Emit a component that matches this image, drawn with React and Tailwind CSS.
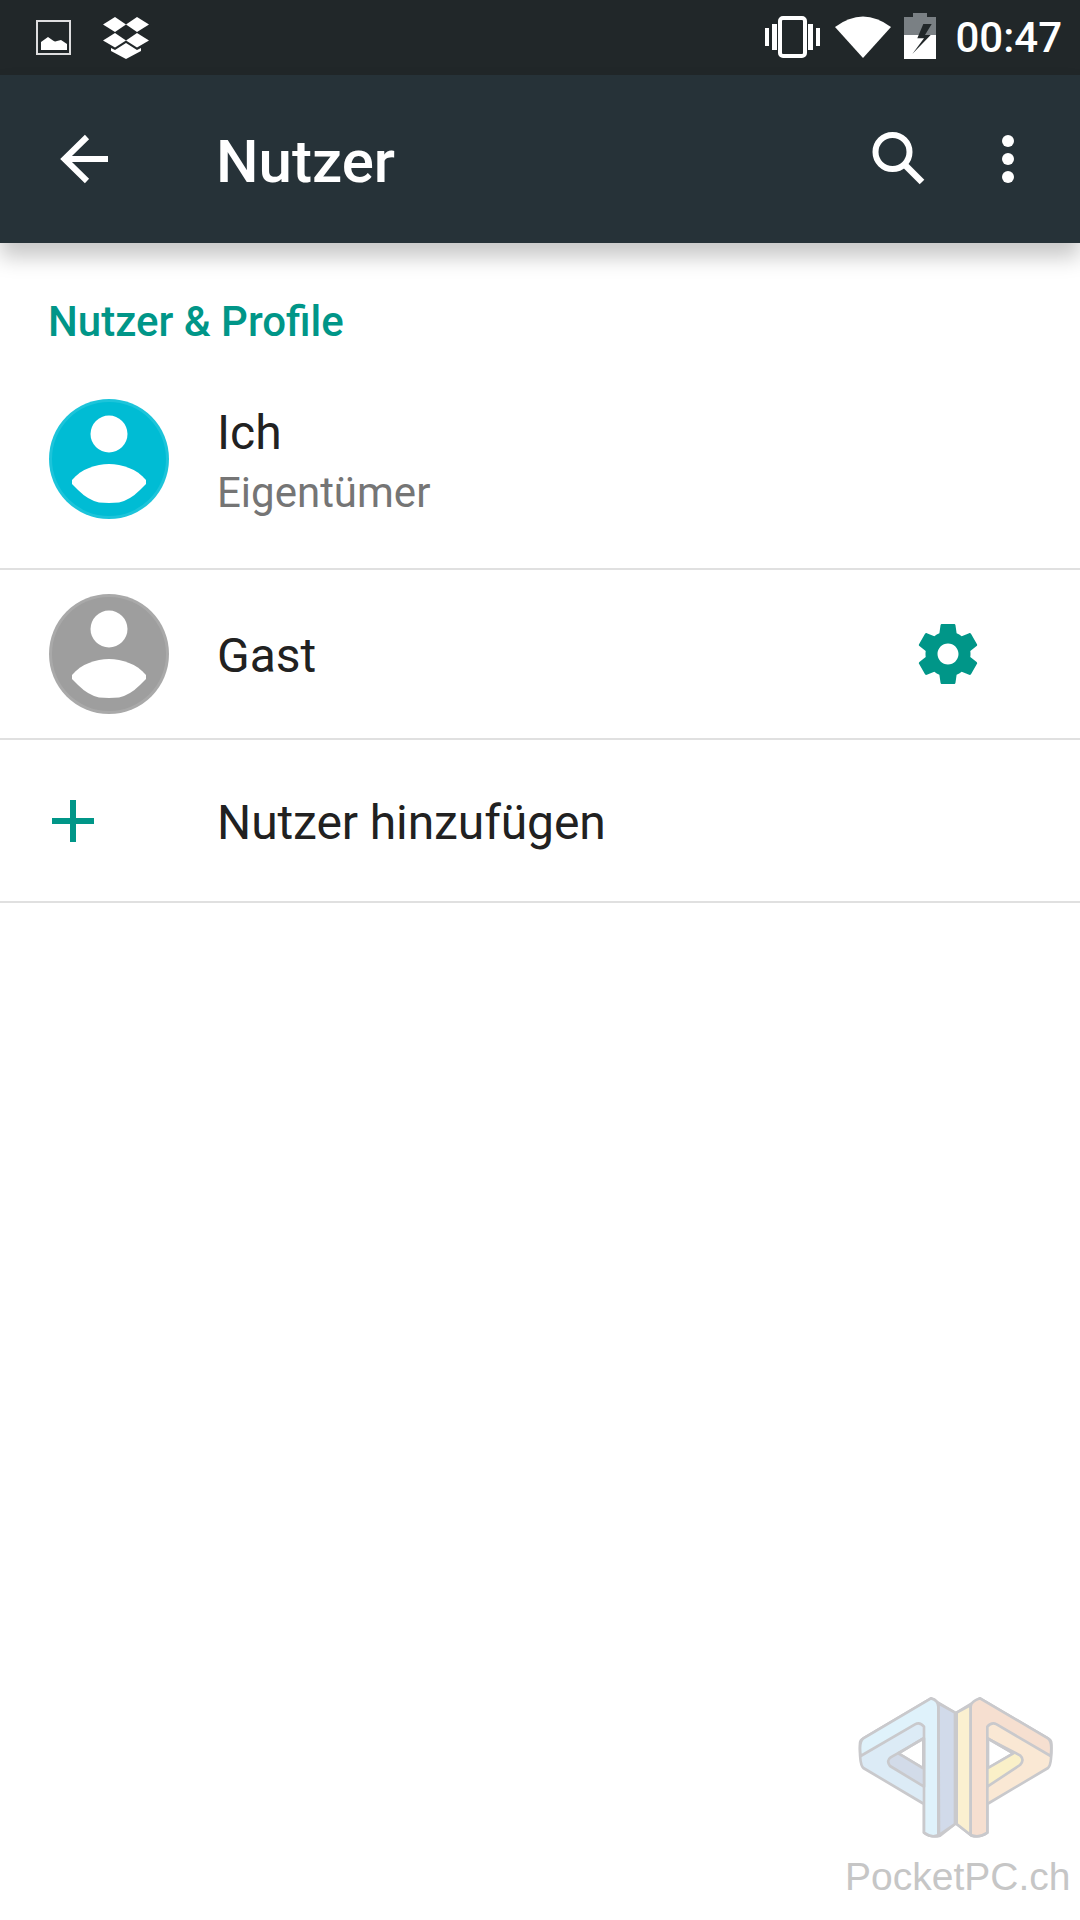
import React from "react";

function ImageIcon() {
  return (
    <svg width="36" height="36" viewBox="0 0 36 36" className="ml-[36px] mt-[20px]">
      <rect x="1" y="1" width="33" height="33" fill="none" stroke="#ffffff" strokeWidth="2" opacity="0.85" />
      <path d="M5 30 V22 L12 17 L17 20.5 Q19 22 21 21 L25 20 L31 24 V30 Z" fill="#ffffff" />
    </svg>
  );
}

function DropboxIcon() {
  return (
    <svg width="46" height="44" viewBox="0 0 46 44" className="ml-[31px] mt-[16px]">
      <g fill="#ffffff">
        <path d="M12 1 L23 8.5 L12 16 L0 8.5 Z" />
        <path d="M34 1 L46 8.5 L34 16 L23 8.5 Z" />
        <path d="M12 17 L23 24.5 L12 31.5 L0 24.5 Z" />
        <path d="M34 17 L46 24.5 L34 31.5 L23 24.5 Z" />
        <path d="M23 27 L34 34 L38 32 V35 L23 43 L8 35 V32 L12 34 Z" />
      </g>
    </svg>
  );
}

function VibrateIcon() {
  return (
    <svg width="55" height="42" viewBox="0 0 55 42" className="mt-[16px]">
      <rect x="15" y="2" width="25" height="38" rx="3" fill="none" stroke="#ffffff" strokeWidth="4" />
      <rect x="0" y="12" width="4" height="18" fill="#ffffff" />
      <rect x="7" y="8" width="5" height="26" fill="#ffffff" />
      <rect x="43" y="8" width="5" height="26" fill="#ffffff" />
      <rect x="51" y="12" width="4" height="18" fill="#ffffff" />
    </svg>
  );
}

function WifiIcon() {
  return (
    <svg width="56" height="44" viewBox="0 0 56 44" className="ml-[15px] mt-[15px]">
      <path d="M0 12 Q28 -9 56 12 L28 43 Z" fill="#ffffff" />
    </svg>
  );
}

function BatteryIcon() {
  return (
    <svg width="32" height="50" viewBox="0 0 32 50" className="ml-[13px] mt-[12px]">
      <path d="M9 1 H23 V5 H32 V23 H0 V5 H9 Z" fill="#7a8084" />
      <path d="M0 23 H32 V47 H0 Z" fill="#ffffff" />
      <path d="M19.3 12 L13.3 26.3 H20 L8.3 42 L26.7 23 H21 L27.7 12 Z" fill="#212729" />
    </svg>
  );
}

function BackIcon() {
  return (
    <svg width="48" height="50" viewBox="0 0 48 50" className="ml-[60px]">
      <path d="M48 25 H5 M27 3 L4.5 25 L27 47" fill="none" stroke="#ffffff" strokeWidth="6" />
    </svg>
  );
}

function SearchIcon() {
  return (
    <svg width="54" height="54" viewBox="0 0 54 54">
      <circle cx="20.5" cy="20" r="17" fill="none" stroke="#ffffff" strokeWidth="6" />
      <path d="M32 32 L50 50" fill="none" stroke="#ffffff" strokeWidth="6.5" />
    </svg>
  );
}

function MoreIcon() {
  return (
    <svg width="12" height="48" viewBox="0 0 12 48" className="ml-[76px]">
      <circle cx="6" cy="6" r="6" fill="#ffffff" />
      <circle cx="6" cy="24" r="6" fill="#ffffff" />
      <circle cx="6" cy="42" r="6" fill="#ffffff" />
    </svg>
  );
}

function Avatar({ color, rim }) {
  return (
    <svg width="120" height="120" viewBox="0 0 120 120" className="shrink-0">
      <circle cx="60" cy="60" r="60" fill={rim} />
      <circle cx="60" cy="60" r="57" fill={color} />
      <circle cx="60" cy="35" r="18.5" fill="#ffffff" />
      <path
        d="M23 81 C32 70 47 65 60 65 C73 65 88 70 97 81 L97 85 L91 91 Q81 101 70 103.5 L60 104 L50 103.5 Q39 101 29 91 L23 85 Z"
        fill="#ffffff"
      />
    </svg>
  );
}

function GearIcon() {
  return (
    <svg width="72" height="72" viewBox="0 0 24 24" className="ml-auto mr-[96px]">
      <path
        fill="#009688"
        fillRule="evenodd"
        d="M19.43 12.98c.04-.32.07-.64.07-.98s-.03-.66-.07-.98l2.11-1.65c.19-.15.24-.42.12-.64l-2-3.46c-.12-.22-.39-.3-.61-.22l-2.49 1c-.52-.4-1.08-.73-1.69-.98l-.38-2.65C14.46 2.18 14.25 2 14 2h-4c-.25 0-.46.18-.49.42l-.38 2.65c-.61.25-1.17.59-1.69.98l-2.49-1c-.23-.09-.49 0-.61.22l-2 3.46c-.13.22-.07.49.12.64l2.11 1.65c-.04.32-.07.65-.07.98s.03.66.07.98l-2.11 1.65c-.19.15-.24.42-.12.64l2 3.46c.12.22.39.3.61.22l2.49-1c.52.4 1.08.73 1.69.98l.38 2.65c.03.24.24.42.49.42h4c.25 0 .46-.18.49-.42l.38-2.65c.61-.25 1.17-.59 1.69-.98l2.49 1c.23.09.49 0 .61-.22l2-3.46c.12-.22.07-.49-.12-.64l-2.11-1.65zM12 15.5c-1.93 0-3.5-1.57-3.5-3.5s1.57-3.5 3.5-3.5 3.5 1.57 3.5 3.5-1.57 3.5-3.5 3.5z"
      />
    </svg>
  );
}

function PlusIcon() {
  return (
    <svg width="42" height="42" viewBox="0 0 42 42" className="ml-[52px] shrink-0">
      <path d="M18 0 H24 V18 H42 V24 H24 V42 H18 V24 H0 V18 H18 Z" fill="#009688" />
    </svg>
  );
}

function WatermarkLogo() {
  return (
    <svg width="260" height="190" viewBox="0 0 780 570" className="block">
      <g stroke="#c9c9cc" strokeWidth="8" strokeLinejoin="round">
        <path d="M333 85 L405 128 V462 L360 497 Q335 505 312 488 V402 L130 294 Q118 285 120 220 Q120 210 130 205 Z M310 205 L235 250 L310 295 Z" fill="#dcebf6" fillRule="evenodd" />
        <path d="M355 100 L405 128 V462 L357 495 Z" fill="#d1daea" />
        <path d="M333 85 Q355 90 355 110 V495 Q335 505 312 488 V170 Q300 155 285 163 L122 258 Q116 215 130 205 Z" fill="#dff2fb" />
        <path d="M312 205 L212 262 Q198 272 210 288 L312 350 Z M310 205 L235 250 L310 295 Z" fill="#d2dbe9" fillRule="evenodd" />
        <path d="M480 85 L410 128 V462 L455 497 Q478 505 502 488 V402 L684 294 Q696 285 694 220 Q694 210 684 205 Z M504 205 L580 250 L504 295 Z" fill="#fae8d4" fillRule="evenodd" />
        <path d="M452 105 L410 128 V462 L452 495 Z" fill="#fbf0d0" />
        <path d="M480 85 Q452 95 452 110 V495 Q478 505 502 488 V170 Q515 155 530 163 L692 258 Q698 215 684 205 Z" fill="#f6dfd0" />
        <path d="M502 205 L600 256 Q615 270 600 285 L502 350 V295 L580 250 L502 205 Z" fill="#faf0c8" />
      </g>
    </svg>
  );
}

export default function App() {
  return (
    <div className="relative w-[1080px] h-[1920px] bg-white overflow-hidden font-['Roboto',sans-serif]">
      {/* status bar */}
      <div className="h-[75px] bg-[#212729] flex items-start">
        <ImageIcon />
        <DropboxIcon />
        <div className="ml-auto flex items-start">
          <VibrateIcon />
          <WifiIcon />
          <BatteryIcon />
          <span className="ml-[19px] mr-[18px] mt-[13px] text-[42px] leading-[50px] font-medium text-white">00:47</span>
        </div>
      </div>

      {/* toolbar */}
      <div className="relative z-10 h-[168px] bg-[#263238] flex items-center shadow-[0_14px_20px_rgba(0,0,0,0.22)]">
        <BackIcon />
        <h1 className="ml-[108px] mt-[5px] text-[60px] leading-[70px] font-medium text-white">Nutzer</h1>
        <div className="ml-auto mr-[66px] flex items-center">
          <SearchIcon />
          <MoreIcon />
        </div>
      </div>

      <div className="h-[107px] pl-[48px] pt-[54px] text-[42px] leading-[50px] font-medium text-[#009688]">
        Nutzer &amp; Profile
      </div>

      <div className="h-[218px] pl-[49px] flex items-center">
        <Avatar color="#00bcd4" rim="#1cc4da" />
        <div className="ml-[48px] mt-[8px]">
          <div className="text-[48px] leading-[60px] text-[#212121]">Ich</div>
          <div className="text-[42px] leading-[60px] text-[#757575]">Eigentümer</div>
        </div>
      </div>
      <div className="h-[2px] bg-[#e0e0e0]" />

      <div className="h-[168px] pl-[49px] flex items-center">
        <Avatar color="#9e9e9e" rim="#a9a9a9" />
        <div className="ml-[48px] mt-[4px] text-[48px] leading-[60px] text-[#212121]">Gast</div>
        <GearIcon />
      </div>
      <div className="h-[2px] bg-[#e0e0e0]" />

      <div className="h-[161px] flex items-center">
        <PlusIcon />
        <div className="ml-[123px] mt-[5px] text-[48px] leading-[60px] tracking-[-0.1px] text-[#212121]">Nutzer hinzufügen</div>
      </div>
      <div className="h-[2px] bg-[#e0e0e0]" />

      {/* watermark */}
      <div className="absolute left-[820px] top-[1670px] w-[260px]">
        <WatermarkLogo />
        <div className="absolute left-[25px] top-[183px] font-['Liberation_Sans',sans-serif] text-[39px] leading-[48px] whitespace-nowrap text-[#c6c6c6]">
          PocketPC.ch
        </div>
      </div>
    </div>
  );
}
